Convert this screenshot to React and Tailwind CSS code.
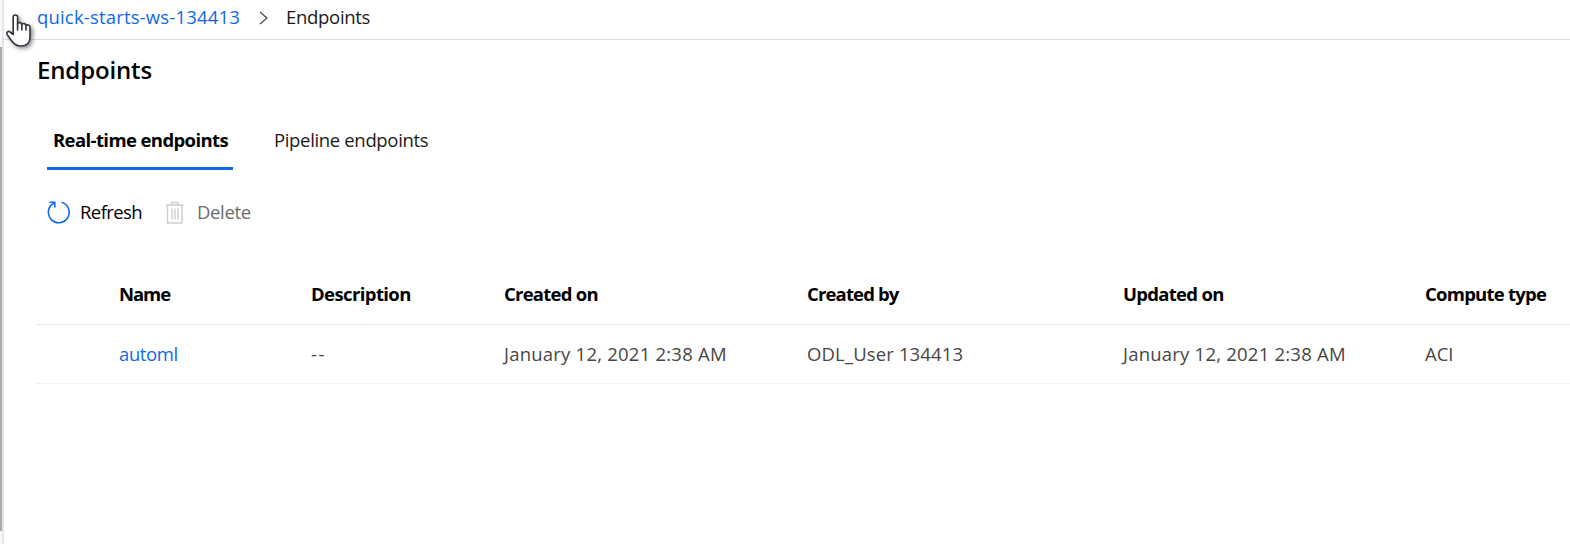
const columns = [
  { label: "Name", value: "automl", link: true, head: "tracking-[-1.05px]", cell: "tracking-[-0.4px]" },
  { label: "Description", value: "--", head: "tracking-[-0.6px]", cell: "tracking-[1.6px]" },
  { label: "Created on", value: "January 12, 2021 2:38 AM", head: "tracking-[-0.75px]", cell: "tracking-[0.22px]" },
  { label: "Created by", value: "ODL_User 134413", head: "tracking-[-0.85px]", cell: "tracking-[0.14px]" },
  { label: "Updated on", value: "January 12, 2021 2:38 AM", head: "tracking-[-0.7px]", cell: "tracking-[0.22px]" },
  { label: "Compute type", value: "ACI", head: "tracking-[-0.75px]", cell: "tracking-[0px]" },
];

const rowGrid =
  "grid grid-cols-[192px_193px_303px_316px_302px_145px] pl-[83px] whitespace-nowrap";

function RefreshIcon() {
  return (
    <svg className="h-6 w-6 shrink-0" viewBox="0 0 24 24" fill="none" stroke="#1068e8" strokeWidth="1.6">
      <path d="M14.5 2.3A10.4 10.4 0 1 1 7.2 3" />
      <path d="M2.5 2.3H7.8V7.5" />
    </svg>
  );
}

function TrashIcon() {
  return (
    <svg className="h-6 w-[18px] shrink-0" viewBox="0 0 18 24" fill="none" stroke="#cfcdcd" strokeWidth="1.4">
      <path d="M0 5H17.5M5.7 5V2.5H12V5M1.5 5V23H16V5M6 8.5V19.5M9 8.5V19.5M12 8.5V19.5" />
    </svg>
  );
}

function HandCursor() {
  return (
    <svg
      className="absolute left-[5px] top-[13px] h-[36px] w-[30px] drop-shadow-[2px_2px_2px_rgba(0,0,0,0.45)]"
      viewBox="0 0 30 36"
      fill="#fff"
      stroke="#33333f"
      strokeWidth="1.6"
      strokeLinejoin="round"
      strokeLinecap="round"
    >
      <path d="M8.2 21.5V4.2C8.2 1.2 12.6 1.2 12.6 4.2V11C13.3 8.8 16.8 9.2 16.8 11.7C17.6 9.8 21 10.4 21 12.8C22 11.2 25 12 25 14.5V24C25 29.5 21.5 33 16 33C11.5 33 9 31 6.8 28L2 21.4C1 19.4 3.4 17.6 5 19Z" />
      <path d="M12.6 11V17M16.8 12V17M21 13V17" fill="none" />
    </svg>
  );
}

export default function App() {
  return (
    <div className="relative flex h-[544px] w-[1570px] overflow-hidden bg-white font-['Open_Sans','Noto_Sans',sans-serif] text-[18.5px] leading-6 text-[#1b1a19]">
      <div className="flex w-[4px] shrink-0 flex-col border-r-2 border-[#e8e5e9] bg-[#faf8fb]">
        <div className="mt-[47px] h-[484px] w-[2px] bg-[#aaa8ab]" />
      </div>

      <main className="flex min-w-0 flex-1 flex-col">
        <nav className="flex h-[40px] shrink-0 items-start whitespace-nowrap border-b border-[#dedede] pl-[33px] pt-[5px]">
          <a className="w-[222px] tracking-[0.18px] text-[#1068e8]">quick-starts-ws-134413</a>
          <svg className="mt-[6px] h-[14px] w-[9px]" viewBox="0 0 9 14" fill="none" stroke="#444" strokeWidth="1.2">
            <path d="M1 1L8 7L1 13" />
          </svg>
          <span className="ml-[18px] tracking-[-0.3px]">Endpoints</span>
        </nav>

        <h1 className="ml-[33px] mt-[14px] h-8 self-start text-[24px] font-semibold leading-8 tracking-[-0.15px] text-black">
          Endpoints
        </h1>

        <div className="ml-[43px] mt-[42px] flex h-[42px] whitespace-nowrap">
          <div className="w-[186px] border-b-[3px] border-[#1068e8] pl-[6px] font-bold tracking-[-0.6px] text-black">
            Real-time endpoints
          </div>
          <div className="pl-[41px] tracking-[-0.34px]">Pipeline endpoints</div>
        </div>

        <div className="ml-[43px] mt-[30px] flex h-6 whitespace-nowrap">
          <RefreshIcon />
          <span className="ml-[9px] w-[86px] tracking-[-0.58px] text-black">Refresh</span>
          <TrashIcon />
          <span className="ml-[13px] tracking-[-0.35px] text-[#6e6c6a]">Delete</span>
        </div>

        <section className="ml-[32px] mt-[58px]">
          <div className={`${rowGrid} h-[43px] border-b border-[#e6e6e6] font-bold text-black`}>
            {columns.map((c) => (
              <span key={c.label} className={c.head}>{c.label}</span>
            ))}
          </div>
          <div className={`${rowGrid} h-[59px] border-b border-[#f3f3f3] pt-[17px] text-[#484644]`}>
            {columns.map((c) => (
              <span key={c.label} className={c.link ? `${c.cell} text-[#1068e8]` : c.cell}>{c.value}</span>
            ))}
          </div>
        </section>
      </main>

      <HandCursor />
    </div>
  );
}
